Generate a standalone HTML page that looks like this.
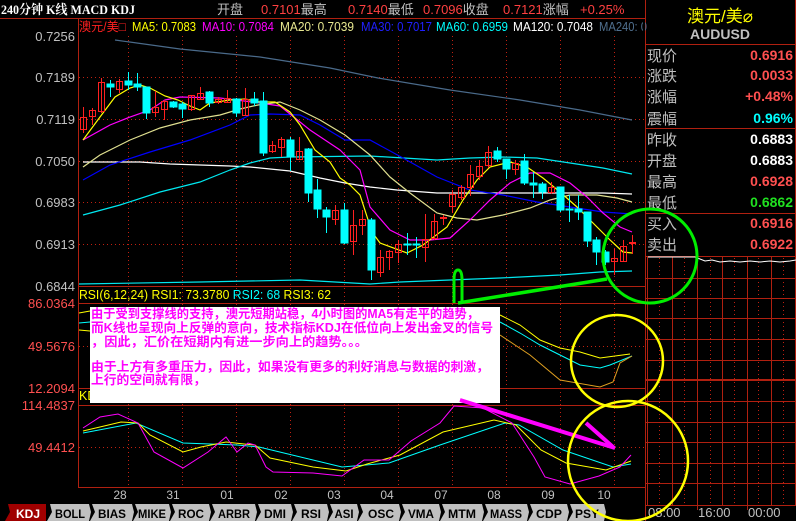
<!DOCTYPE html>
<html><head><meta charset="utf-8"><style>
html,body{margin:0;padding:0;background:#000;width:796px;height:521px;overflow:hidden}
svg{display:block}
text{font-family:"Liberation Sans","Noto Sans CJK SC",sans-serif}
.cj{font-family:"Liberation Sans","Noto Sans CJK SC",sans-serif}
</style></head><body>
<svg width="796" height="521" viewBox="0 0 796 521" xmlns="http://www.w3.org/2000/svg">
<rect width="796" height="521" fill="#000"/>
<!-- header -->
<text x="1" y="14" fill="#fff" font-size="13" font-weight="bold" style="font-family:'Liberation Serif','Noto Serif CJK SC',serif" textLength="134" lengthAdjust="spacingAndGlyphs">240分钟 K线 MACD KDJ</text>
<g font-size="13">
<text x="217" y="14" fill="#c0c0c0">开盘</text>
<text x="261" y="14" fill="#ff4040">0.7101<tspan fill="#c0c0c0">最高</tspan></text>
<text x="348" y="14" fill="#ff4040">0.7140<tspan fill="#c0c0c0">最低</tspan></text>
<text x="423" y="14" fill="#ff4040">0.7096<tspan fill="#c0c0c0">收盘</tspan></text>
<text x="503" y="14" fill="#ff4040">0.7121<tspan fill="#c0c0c0">涨幅</tspan></text>
<text x="580" y="14" fill="#ff4040">+0.25%</text>
</g>
<!-- frame lines -->
<g stroke="#b02010" stroke-width="1" fill="none">
<line x1="0" y1="18.5" x2="646" y2="18.5"/>
<line x1="78.5" y1="18" x2="78.5" y2="487"/>
<line x1="645.5" y1="0" x2="645.5" y2="521"/>
<line x1="78" y1="286.5" x2="646" y2="286.5"/>
<line x1="78" y1="303.5" x2="646" y2="303.5"/>
<line x1="78" y1="388.5" x2="646" y2="388.5"/>
<line x1="78" y1="405.5" x2="646" y2="405.5"/>
<line x1="78" y1="487.5" x2="646" y2="487.5"/>
<line x1="646" y1="44.5" x2="796" y2="44.5"/>
<line x1="646" y1="128.5" x2="796" y2="128.5"/>
<line x1="646" y1="213.5" x2="796" y2="213.5"/>
<line x1="795.5" y1="0" x2="795.5" y2="505"/>
</g>
<!-- dotted grid -->
<g stroke="#c02010" stroke-width="1" stroke-dasharray="1,3">
<line x1="128.5" y1="36" x2="128.5" y2="487"/><line x1="182.5" y1="36" x2="182.5" y2="487"/>
<line x1="236.5" y1="36" x2="236.5" y2="487"/><line x1="290.5" y1="36" x2="290.5" y2="487"/>
<line x1="344.5" y1="36" x2="344.5" y2="487"/><line x1="398.5" y1="36" x2="398.5" y2="487"/>
<line x1="452.5" y1="36" x2="452.5" y2="487"/><line x1="506.5" y1="36" x2="506.5" y2="487"/>
<line x1="560.5" y1="36" x2="560.5" y2="487"/><line x1="614.5" y1="36" x2="614.5" y2="487"/>
<line x1="79" y1="77.5" x2="645" y2="77.5"/><line x1="79" y1="119.5" x2="645" y2="119.5"/>
<line x1="79" y1="161.5" x2="645" y2="161.5"/><line x1="79" y1="202.5" x2="645" y2="202.5"/>
<line x1="79" y1="244.5" x2="645" y2="244.5"/><line x1="79" y1="346.5" x2="645" y2="346.5"/>
<line x1="79" y1="447.5" x2="645" y2="447.5"/>
</g>
<!-- MA row -->
<g font-size="12.5">
<text x="79" y="31" fill="#ff2020" textLength="47" lengthAdjust="spacingAndGlyphs">澳元/美□</text>
<text x="132" y="31" fill="#ffff00" textLength="64" lengthAdjust="spacingAndGlyphs">MA5: 0.7083</text>
<text x="202" y="31" fill="#ff00ff" textLength="72" lengthAdjust="spacingAndGlyphs">MA10: 0.7084</text>
<text x="280" y="31" fill="#e8e890" textLength="74" lengthAdjust="spacingAndGlyphs">MA20: 0.7039</text>
<text x="361" y="31" fill="#2020ff" textLength="71" lengthAdjust="spacingAndGlyphs">MA30: 0.7017</text>
<text x="436" y="31" fill="#00ffff" textLength="72" lengthAdjust="spacingAndGlyphs">MA60: 0.6959</text>
<text x="513" y="31" fill="#ffffff" textLength="80" lengthAdjust="spacingAndGlyphs">MA120: 0.7048</text>
<text x="599" y="31" fill="#50708f" textLength="48" lengthAdjust="spacingAndGlyphs">MA240: 0</text>
</g>
<rect x="643" y="19" width="2" height="18" fill="#000"/>
<!-- price axis -->
<g font-size="13" fill="#c0c0c0" text-anchor="end">
<text x="75" y="41">0.7256</text><text x="75" y="82">0.7189</text><text x="75" y="124">0.7119</text>
<text x="75" y="166">0.7050</text><text x="75" y="207">0.6983</text><text x="75" y="249">0.6913</text>
<text x="75" y="291">0.6844</text>
</g>
<g font-size="13" fill="#ff5050" text-anchor="end">
<text x="75" y="308">86.0364</text><text x="75" y="351">49.5676</text><text x="75" y="393">12.2094</text>
<text x="75" y="410">114.4837</text><text x="75" y="452">49.4412</text>
</g>
<!-- MA lines -->
<g fill="none" stroke-width="1.2">
<polyline stroke="#4a6a8a" points="115,40 180,49 260,57 330,68 378,78 450,90 520,100 580,110 632,120"/>
<polyline stroke="#ffffff" points="83,162 140,162 170,164 230,166 250,167 290,171 320,178 345,183 370,187 397,190 437,193 503,193 570,193 603,193 632,194"/>
<polyline stroke="#00e8f0" points="83,215 120,205 160,192 200,182 230,170 250,163 270,158 290,157 370,156 437,160 470,158 503,157 537,158 570,163 603,168 632,174"/>
<polyline stroke="#0000ff" points="83,180 110,165 150,152 190,140 230,125 250,115 270,114 300,115 320,125 345,140 370,140 403,158 437,177 470,190 503,195 537,202 570,207 603,212 632,214"/>
<polyline stroke="#e0e090" points="83,167 100,155 130,140 160,128 190,120 220,115 240,109 258,105 280,102 300,110 320,120 345,135 370,155 390,177 410,193 437,213 457,218 477,220 503,215 530,208 550,200 570,195 597,195 617,198 632,202"/>
<polyline stroke="#ff00ff" points="83,140 110,125 130,117 150,110 165,100 180,97 220,98 260,103 280,106 290,114 300,122 310,130 325,140 340,150 360,170 370,207 390,230 410,240 430,240 450,238 470,220 490,200 510,183 530,173 550,173 570,183 587,197 603,213 620,227 632,232"/>
<polyline stroke="#ffff00" points="83,140 100,117 115,97 130,88 140,85 150,88 165,96 178,100 190,106 200,110 210,103 230,100 245,99 260,102 275,102 290,112 300,125 315,150 330,162 340,178 350,185 360,195 372,232 380,243 407,253 423,245 447,227 463,200 477,180 490,167 510,162 527,167 543,178 560,192 577,207 593,223 610,240 623,252 632,253"/>
<polyline stroke="#00e8f0" points="79,284 200,282 300,280 370,284 400,282 450,280 500,278 560,275 600,272 632,271"/>
</g>
<!-- candles -->
<g stroke-width="1">
<g stroke="#ff2020" fill="none">
<line x1="83.5" y1="107" x2="83.5" y2="133"/><rect x="80.5" y="117.5" width="6" height="12"/>
<line x1="92.5" y1="108" x2="92.5" y2="125"/><rect x="89.5" y="110.5" width="6" height="6"/>
<line x1="101.5" y1="78" x2="101.5" y2="113"/><rect x="98.5" y="82.5" width="6" height="29"/>
<line x1="119.5" y1="79" x2="119.5" y2="93"/><rect x="116.5" y="81.5" width="6" height="8"/>
<line x1="155.5" y1="91" x2="155.5" y2="117"/><rect x="152.5" y="107.5" width="6" height="5"/>
<line x1="164.5" y1="100" x2="164.5" y2="120"/><rect x="161.5" y="101.5" width="6" height="8"/>
<line x1="191.5" y1="95" x2="191.5" y2="111"/><rect x="188.5" y="95.5" width="6" height="14"/>
<line x1="200.5" y1="87" x2="200.5" y2="100"/><rect x="197.5" y="93.5" width="6" height="6"/>
<line x1="218.5" y1="97" x2="218.5" y2="104"/><rect x="215.5" y="99.5" width="6" height="3"/>
<line x1="227.5" y1="90" x2="227.5" y2="103"/><rect x="224.5" y="98.5" width="6" height="4"/>
<line x1="245.5" y1="88" x2="245.5" y2="116"/><rect x="242.5" y="99.5" width="6" height="16"/>
<line x1="272.5" y1="141" x2="272.5" y2="153"/><rect x="269.5" y="145.5" width="6" height="6"/>
<line x1="281.5" y1="137" x2="281.5" y2="157"/><rect x="278.5" y="139.5" width="6" height="8"/>
<line x1="299.5" y1="137" x2="299.5" y2="160"/><rect x="296.5" y="151.5" width="6" height="8"/>
<line x1="335.5" y1="205" x2="335.5" y2="225"/><rect x="332.5" y="210.5" width="6" height="9"/>
<line x1="353.5" y1="210" x2="353.5" y2="255"/><rect x="350.5" y="225.5" width="6" height="16"/>
<line x1="362.5" y1="210" x2="362.5" y2="235"/><rect x="359.5" y="219.5" width="6" height="6"/>
<line x1="380.5" y1="250" x2="380.5" y2="277"/><rect x="377.5" y="257.5" width="6" height="15"/>
<line x1="389.5" y1="250" x2="389.5" y2="270"/><rect x="386.5" y="251.5" width="6" height="6"/>
<line x1="398.5" y1="240" x2="398.5" y2="263"/><rect x="395.5" y="244.5" width="6" height="8"/>
<line x1="425.5" y1="214" x2="425.5" y2="262"/><rect x="422.5" y="239.5" width="6" height="8"/>
<line x1="434.5" y1="214" x2="434.5" y2="240"/><rect x="431.5" y="221.5" width="6" height="17"/>
<line x1="443.5" y1="215" x2="443.5" y2="225"/><rect x="440.5" y="217.5" width="6" height="1"/>
<line x1="452.5" y1="190" x2="452.5" y2="213"/><rect x="449.5" y="194.5" width="6" height="12"/>
<line x1="461.5" y1="185" x2="461.5" y2="200"/><rect x="458.5" y="187.5" width="6" height="10"/>
<line x1="470.5" y1="165" x2="470.5" y2="196"/><rect x="467.5" y="174.5" width="6" height="13"/>
<line x1="479.5" y1="160" x2="479.5" y2="180"/><rect x="476.5" y="166.5" width="6" height="10"/>
<line x1="488.5" y1="146" x2="488.5" y2="168"/><rect x="485.5" y="152.5" width="6" height="13"/>
<line x1="515.5" y1="160" x2="515.5" y2="175"/><rect x="512.5" y="163.5" width="6" height="6"/>
<line x1="551.5" y1="182" x2="551.5" y2="194"/><rect x="548.5" y="187.5" width="6" height="5"/>
<line x1="614.5" y1="249" x2="614.5" y2="275"/><rect x="611.5" y="258.5" width="6" height="3"/>
<line x1="623.5" y1="240" x2="623.5" y2="262"/><rect x="620.5" y="246.5" width="6" height="15"/>
<line x1="632.5" y1="235" x2="632.5" y2="254"/><rect x="629.5" y="242.5" width="6" height="1"/>
</g>
<g stroke="#00ffff" fill="#00ffff">
<line x1="110.5" y1="80" x2="110.5" y2="97"/><rect x="107" y="84" width="7" height="3"/>
<line x1="128.5" y1="72" x2="128.5" y2="90"/><rect x="125" y="81" width="7" height="4"/>
<line x1="137.5" y1="73" x2="137.5" y2="91"/><rect x="134" y="84" width="7" height="3"/>
<line x1="146.5" y1="87" x2="146.5" y2="119"/><rect x="143" y="87" width="7" height="26"/>
<line x1="173.5" y1="101" x2="173.5" y2="108"/><rect x="170" y="102" width="7" height="5"/>
<line x1="182.5" y1="102" x2="182.5" y2="118"/><rect x="179" y="104" width="7" height="5"/>
<line x1="209.5" y1="91" x2="209.5" y2="107"/><rect x="206" y="92" width="7" height="11"/>
<line x1="236.5" y1="98" x2="236.5" y2="117"/><rect x="233" y="99" width="7" height="14"/>
<line x1="254.5" y1="92" x2="254.5" y2="106"/><rect x="251" y="99" width="7" height="4"/>
<line x1="263.5" y1="92" x2="263.5" y2="156"/><rect x="260" y="101" width="7" height="52"/>
<line x1="290.5" y1="137" x2="290.5" y2="171"/><rect x="287" y="140" width="7" height="17"/>
<line x1="308.5" y1="148" x2="308.5" y2="202"/><rect x="305" y="149" width="7" height="44"/>
<line x1="317.5" y1="179" x2="317.5" y2="218"/><rect x="314" y="190" width="7" height="19"/>
<line x1="326.5" y1="207" x2="326.5" y2="233"/><rect x="323" y="210" width="7" height="7"/>
<line x1="344.5" y1="203" x2="344.5" y2="244"/><rect x="341" y="210" width="7" height="33"/>
<line x1="371.5" y1="218" x2="371.5" y2="280"/><rect x="368" y="220" width="7" height="50"/>
<line x1="407.5" y1="233" x2="407.5" y2="255"/><rect x="404" y="244" width="7" height="1"/>
<line x1="416.5" y1="237" x2="416.5" y2="258"/><rect x="413" y="244" width="7" height="1"/>
<line x1="497.5" y1="147" x2="497.5" y2="162"/><rect x="494" y="151" width="7" height="8"/>
<line x1="506.5" y1="159" x2="506.5" y2="179"/><rect x="503" y="159" width="7" height="10"/>
<line x1="524.5" y1="154" x2="524.5" y2="185"/><rect x="521" y="161" width="7" height="22"/>
<line x1="533.5" y1="172" x2="533.5" y2="198"/><rect x="530" y="183" width="7" height="2"/>
<line x1="542.5" y1="182" x2="542.5" y2="199"/><rect x="539" y="184" width="7" height="8"/>
<line x1="560.5" y1="187" x2="560.5" y2="212"/><rect x="557" y="187" width="7" height="23"/>
<line x1="569.5" y1="195" x2="569.5" y2="222"/><rect x="566" y="209" width="7" height="1"/>
<line x1="578.5" y1="195" x2="578.5" y2="220"/><rect x="575" y="209" width="7" height="3"/>
<line x1="587.5" y1="212" x2="587.5" y2="247"/><rect x="584" y="212" width="7" height="29"/>
<line x1="596.5" y1="237" x2="596.5" y2="265"/><rect x="593" y="240" width="7" height="12"/>
<line x1="605.5" y1="250" x2="605.5" y2="265"/><rect x="602" y="252" width="7" height="10"/>
</g>
</g>
<!-- RSI -->
<text x="79" y="299" font-size="12.5" fill="#ffff00" textLength="252" lengthAdjust="spacingAndGlyphs">RSI(6,12,24) RSI1: 73.3780 <tspan fill="#00ffff">RSI2: 68</tspan> RSI3: 62</text>
<g fill="none" stroke-width="1">
<polyline stroke="#ffff00" points="79,313 90,311"/>
<polyline stroke="#00ffff" points="79,323 90,322"/>
<polyline stroke="#ffff00" points="79,330 90,331"/>
<polyline stroke="#ffff00" points="500,315 520,325 540,340 560,348 580,352 600,358 615,356 630,354"/>
<polyline stroke="#00ffff" points="500,322 520,333 540,345 560,355 580,365 600,368 610,365 632,356"/>
<polyline stroke="#e0a020" points="500,335 530,355 560,380 600,387 613,382 620,363 632,356"/>
</g>
<!-- text box -->
<rect x="90" y="307" width="410" height="96" fill="#fff"/>
<g font-size="12.5" font-weight="bold" fill="#ff00ff" class="cj">
<text x="91" y="318" textLength="388" lengthAdjust="spacingAndGlyphs">由于受到支撑线的支持，澳元短期站稳，4小时图的MA5有走平的趋势，</text>
<text x="91" y="332" textLength="402" lengthAdjust="spacingAndGlyphs">而K线也呈现向上反弹的意向，技术指标KDJ在低位向上发出金叉的信号</text>
<text x="91" y="346" textLength="277" lengthAdjust="spacingAndGlyphs">，因此，汇价在短期内有进一步向上的趋势。。。</text>
<text x="91" y="371" textLength="398" lengthAdjust="spacingAndGlyphs">由于上方有多重压力，因此，如果没有更多的利好消息与数据的刺激，</text>
<text x="91" y="384" textLength="115" lengthAdjust="spacingAndGlyphs">上行的空间就有限，</text>
</g>
<text x="79" y="400" font-size="12.5" fill="#ffff00">KD</text>
<rect x="90" y="388" width="410" height="15" fill="#fff"/>
<!-- KDJ -->
<g fill="none" stroke-width="1">
<polyline stroke="#00ffff" points="83,433 136,423 183,443 237,445 259,447 342,467 389,463 440,445 505,423 519,425 563,450 613,467 631,464"/>
<polyline stroke="#ffff00" points="83,431 121,422 138,423 150,435 183,452 201,447 226,442 244,444 255,445 270,458 313,467 346,471 367,464 400,455 443,432 494,420 516,425 541,450 566,463 606,470 631,461"/>
<polyline stroke="#ff00ff" points="83,428 100,417 118,414 138,423 154,452 183,468 208,452 226,437 237,452 248,443 255,445 266,467 273,472 313,473 342,476 364,460 389,460 411,441 440,423 454,406 483,408 512,423 534,457 545,477 570,484 599,476 620,467 631,455"/>
</g>
<line x1="460" y1="400" x2="615" y2="448" stroke="#ff00ff" stroke-width="4"/>
<line x1="586" y1="423" x2="613" y2="447" stroke="#ff00ff" stroke-width="4"/>
<!-- dates -->
<g font-size="12" fill="#c0c0c0" text-anchor="middle">
<text x="120" y="499">28</text><text x="173" y="499">31</text><text x="227" y="499">01</text>
<text x="281" y="499">02</text><text x="334" y="499">03</text><text x="387" y="499">04</text>
<text x="441" y="499">07</text><text x="494" y="499">08</text><text x="548" y="499">09</text>
<text x="604" y="499">10</text>
</g>
<!-- tabs -->
<g font-size="12" font-weight="bold" text-anchor="middle">
<polygon points="8,504 46,504 46,521 5,521 10,512" fill="#a00000"/><text x="28" y="518" fill="#fff">KDJ</text>
<g fill="#c0c0c0">
<polygon points="50,504 89,504 91,512 89,521 47,521 52,512"/>
<polygon points="92,504 132,504 134,512 132,521 90,521 95,512"/>
<polygon points="135,504 169,504 171,512 169,521 133,521 138,512"/>
<polygon points="172,504 209,504 211,512 209,521 170,521 175,512"/>
<polygon points="212,504 255,504 257,512 255,521 210,521 215,512"/>
<polygon points="258,504 291,504 293,512 291,521 256,521 261,512"/>
<polygon points="294,504 327,504 329,512 327,521 292,521 297,512"/>
<polygon points="330,504 357,504 359,512 357,521 328,521 333,512"/>
<polygon points="360,504 399,504 401,512 399,521 358,521 363,512"/>
<polygon points="402,504 439,504 441,512 439,521 400,521 405,512"/>
<polygon points="442,504 482,504 484,512 482,521 440,521 445,512"/>
<polygon points="485,504 527,504 529,512 527,521 483,521 488,512"/>
<polygon points="530,504 567,504 569,512 567,521 528,521 533,512"/>
<polygon points="570,504 604,504 606,512 604,521 568,521 573,512"/>
</g>
<g fill="#000">
<text x="70" y="518" textLength="30" lengthAdjust="spacingAndGlyphs">BOLL</text><text x="112" y="518" textLength="28" lengthAdjust="spacingAndGlyphs">BIAS</text><text x="152" y="518" textLength="28" lengthAdjust="spacingAndGlyphs">MIKE</text>
<text x="191" y="518" textLength="26" lengthAdjust="spacingAndGlyphs">ROC</text><text x="234" y="518" textLength="32" lengthAdjust="spacingAndGlyphs">ARBR</text><text x="275" y="518" textLength="22" lengthAdjust="spacingAndGlyphs">DMI</text>
<text x="311" y="518" textLength="20" lengthAdjust="spacingAndGlyphs">RSI</text><text x="344" y="518" textLength="19" lengthAdjust="spacingAndGlyphs">ASI</text><text x="381" y="518" textLength="26" lengthAdjust="spacingAndGlyphs">OSC</text>
<text x="421" y="518" textLength="26" lengthAdjust="spacingAndGlyphs">VMA</text><text x="462" y="518" textLength="28" lengthAdjust="spacingAndGlyphs">MTM</text><text x="506" y="518" textLength="32" lengthAdjust="spacingAndGlyphs">MASS</text>
<text x="549" y="518" textLength="26" lengthAdjust="spacingAndGlyphs">CDP</text><text x="587" y="518" textLength="24" lengthAdjust="spacingAndGlyphs">PSY</text>
</g>
</g>
<!-- right panel -->
<text x="720" y="22" font-size="17" fill="#ffff00" text-anchor="middle">澳元/美⌀</text>
<text x="720" y="39" font-size="14" font-weight="bold" fill="#c0c0c0" text-anchor="middle">AUDUSD</text>
<g font-size="15" fill="#c0c0c0">
<text x="647" y="61">现价</text><text x="647" y="81">涨跌</text><text x="647" y="102">涨幅</text>
<text x="647" y="124">震幅</text><text x="647" y="145">昨收</text><text x="647" y="166">开盘</text>
<text x="647" y="187">最高</text><text x="647" y="208">最低</text><text x="647" y="229">买入</text>
<text x="647" y="250">卖出</text>
</g>
<g font-size="14" font-weight="bold" text-anchor="end">
<text x="793" y="60" fill="#ff5050">0.6916</text><text x="793" y="80" fill="#ff5050">0.0033</text>
<text x="793" y="101" fill="#ff5050">+0.48%</text><text x="793" y="123" fill="#00ffff">0.96%</text>
<text x="793" y="144" fill="#fff">0.6883</text><text x="793" y="165" fill="#fff">0.6883</text>
<text x="793" y="186" fill="#ff5050">0.6928</text><text x="793" y="207" fill="#20e020">0.6862</text>
<text x="793" y="228" fill="#ff5050">0.6916</text><text x="793" y="249" fill="#ff5050">0.6922</text>
</g>
<!-- mini chart grid -->
<g stroke="#b02010" stroke-width="1">
<line x1="646" y1="256.5" x2="796" y2="256.5"/>
<line x1="646" y1="278.5" x2="796" y2="278.5"/><line x1="646" y1="298.5" x2="796" y2="298.5"/>
<line x1="646" y1="318.5" x2="796" y2="318.5"/><line x1="646" y1="339.5" x2="796" y2="339.5"/>
<line x1="646" y1="360.5" x2="796" y2="360.5"/><line x1="646" y1="380" x2="796" y2="380" stroke-width="2"/>
<line x1="646" y1="401.5" x2="796" y2="401.5"/><line x1="646" y1="422.5" x2="796" y2="422.5"/>
<line x1="646" y1="442.5" x2="796" y2="442.5"/><line x1="646" y1="463.5" x2="796" y2="463.5"/>
<line x1="646" y1="483.5" x2="796" y2="483.5"/><line x1="646" y1="505.5" x2="796" y2="505.5"/>
<line x1="647.5" y1="256" x2="647.5" y2="505"/><line x1="672.5" y1="256" x2="672.5" y2="505"/>
<line x1="697.5" y1="256" x2="697.5" y2="510"/><line x1="722.5" y1="256" x2="722.5" y2="505"/>
<line x1="747.5" y1="256" x2="747.5" y2="510"/><line x1="771.5" y1="256" x2="771.5" y2="505"/>
</g>
<g stroke="#c02010" stroke-dasharray="1,3">
<line x1="659.5" y1="258" x2="659.5" y2="505"/><line x1="684.5" y1="258" x2="684.5" y2="505"/>
<line x1="710.5" y1="258" x2="710.5" y2="505"/><line x1="734.5" y1="258" x2="734.5" y2="505"/>
<line x1="758.5" y1="258" x2="758.5" y2="505"/><line x1="783.5" y1="258" x2="783.5" y2="505"/>
</g>
<polyline fill="none" stroke="#fff" stroke-width="1" points="648,257 670,257 695,257 700,259 705,261 712,260 720,262 730,261 740,262 750,261 760,262 770,261 780,262 790,261 796,260"/>
<g font-size="13" fill="#c0c0c0">
<text x="648" y="517">08:00</text><text x="698" y="517">16:00</text><text x="748" y="517">00:00</text>
</g>
<!-- annotation shapes -->
<g fill="none">
<circle cx="650" cy="256" r="47" stroke="#00ee00" stroke-width="3"/>
<path d="M454,303 L454,280 Q454,270 458,270 Q462,270 462,280 L462,303" stroke="#00ee00" stroke-width="3"/>
<line x1="458" y1="303" x2="607" y2="279" stroke="#00ee00" stroke-width="3.5"/>
<circle cx="617" cy="361" r="46" stroke="#ffff00" stroke-width="2.5"/>
<circle cx="628" cy="461" r="60" stroke="#ffff00" stroke-width="2.5"/>
</g>
</svg>
</body></html>
